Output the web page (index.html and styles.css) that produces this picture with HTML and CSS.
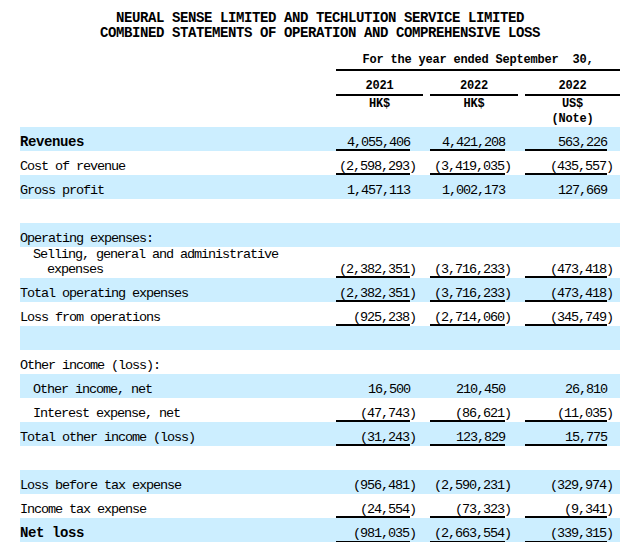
FILE: index.html
```html
<!DOCTYPE html>
<html>
<head>
<meta charset="utf-8">
<link rel="stylesheet" href="styles.css">
</head>
<body>
<div class="page">
  <div class="title">
    <div>NEURAL SENSE LIMITED AND TECHLUTION SERVICE LIMITED</div>
    <div>COMBINED STATEMENTS OF OPERATION AND COMPREHENSIVE LOSS</div>
  </div>
  <div class="head">
    <div class="grid">
      <div></div>
      <div class="period">For the year ended September  30,</div>
    </div>
    <div class="grid">
      <div></div>
      <div class="yr">2021</div>
      <div class="yr">2022</div>
      <div class="yr">2022</div>
    </div>
    <div class="grid">
      <div></div>
      <div class="cur">HK$</div>
      <div class="cur">HK$</div>
      <div class="cur">US$<br>(Note)</div>
    </div>
  </div>
  <div class="stmt">
    <div class="row grid">
      <div class="lbl b">Revenues</div>
      <div class="v u">4,055,406</div>
      <div class="v u">4,421,208</div>
      <div class="v u">563,226</div>
    </div>
    <div class="row grid">
      <div class="lbl">Cost of revenue</div>
      <div class="v u">(2,598,293<span class="p">)</span></div>
      <div class="v u">(3,419,035<span class="p">)</span></div>
      <div class="v u">(435,557<span class="p">)</span></div>
    </div>
    <div class="row grid">
      <div class="lbl">Gross profit</div>
      <div class="v">1,457,113</div>
      <div class="v">1,002,173</div>
      <div class="v">127,669</div>
    </div>
    <div class="row grid"></div>
    <div class="row grid">
      <div class="lbl">Operating expenses:</div>
    </div>
    <div class="row grid">
      <div class="lbl i2">Selling, general and administrative expenses</div>
      <div class="v u">(2,382,351<span class="p">)</span></div>
      <div class="v u">(3,716,233<span class="p">)</span></div>
      <div class="v u">(473,418<span class="p">)</span></div>
    </div>
    <div class="row grid">
      <div class="lbl">Total operating expenses</div>
      <div class="v u">(2,382,351<span class="p">)</span></div>
      <div class="v u">(3,716,233<span class="p">)</span></div>
      <div class="v u">(473,418<span class="p">)</span></div>
    </div>
    <div class="row grid">
      <div class="lbl">Loss from operations</div>
      <div class="v u">(925,238<span class="p">)</span></div>
      <div class="v u">(2,714,060<span class="p">)</span></div>
      <div class="v u">(345,749<span class="p">)</span></div>
    </div>
    <div class="row grid"></div>
    <div class="row grid">
      <div class="lbl">Other income (loss):</div>
    </div>
    <div class="row grid">
      <div class="lbl i1">Other income, net</div>
      <div class="v">16,500</div>
      <div class="v">210,450</div>
      <div class="v">26,810</div>
    </div>
    <div class="row grid">
      <div class="lbl i1">Interest expense, net</div>
      <div class="v u">(47,743<span class="p">)</span></div>
      <div class="v u">(86,621<span class="p">)</span></div>
      <div class="v u">(11,035<span class="p">)</span></div>
    </div>
    <div class="row grid">
      <div class="lbl">Total other income (loss)</div>
      <div class="v u">(31,243<span class="p">)</span></div>
      <div class="v u">123,829</div>
      <div class="v u">15,775</div>
    </div>
    <div class="row grid"></div>
    <div class="row grid">
      <div class="lbl">Loss before tax expense</div>
      <div class="v">(956,481<span class="p">)</span></div>
      <div class="v">(2,590,231<span class="p">)</span></div>
      <div class="v">(329,974<span class="p">)</span></div>
    </div>
    <div class="row grid">
      <div class="lbl">Income tax expense</div>
      <div class="v u">(24,554<span class="p">)</span></div>
      <div class="v u">(73,323<span class="p">)</span></div>
      <div class="v u">(9,341<span class="p">)</span></div>
    </div>
    <div class="row grid">
      <div class="lbl b">Net loss</div>
      <div class="v dbl">(981,035<span class="p">)</span></div>
      <div class="v dbl">(2,663,554<span class="p">)</span></div>
      <div class="v dbl">(339,315<span class="p">)</span></div>
    </div>
  </div>
</div>
</body>
</html>
```

FILE: styles.css
```css
* {
  box-sizing: border-box;
}

body {
  margin: 0;
  background: #ffffff;
  color: #000000;
  font-family: "Liberation Mono", "Courier New", monospace;
}

.page {
  width: 600px;
  margin-left: 20px;
  padding-top: 11px;
}

.title {
  font-weight: bold;
  font-size: 14px;
  letter-spacing: -0.4px;
  line-height: 15px;
  text-align: center;
}

.head {
  margin-top: 12px;
  font-weight: bold;
  font-size: 12px;
  letter-spacing: -0.2px;
  line-height: 15px;
}

.grid {
  display: grid;
  grid-template-columns: 309px 87px 88px 95px;
  column-gap: 7px;
}

.period {
  grid-column: 2 / 5;
  text-align: center;
  white-space: pre;
  padding-bottom: 1px;
  border-bottom: 2px solid #000;
}

.yr {
  text-align: center;
  padding-top: 8px;
  border-bottom: 2px solid #000;
}

.cur {
  text-align: center;
  padding-top: 1px;
}

.row {
  min-height: 24px;
  align-items: end;
}

.stmt .row:nth-child(odd) {
  background: #cceeff;
}

.lbl,
.v {
  font-size: 13.5px;
  letter-spacing: -1.1px;
  line-height: 15px;
  padding-bottom: 1px;
}

.lbl.b {
  font-weight: bold;
  font-size: 14px;
  letter-spacing: -0.4px;
}

.i1 {
  padding-left: 13px;
}

.i2 {
  padding-left: 27px;
  text-indent: -14px;
}

.v {
  margin-right: 13px;
  text-align: right;
  white-space: nowrap;
}

.p {
  margin-right: -6px;
}

.u {
  box-shadow: inset 0 -2px 0 #000;
}

.dbl {
  box-shadow: inset 0 -1px 0 #000, 0 1px 0 #fff, 0 2px 0 #000;
}
```
